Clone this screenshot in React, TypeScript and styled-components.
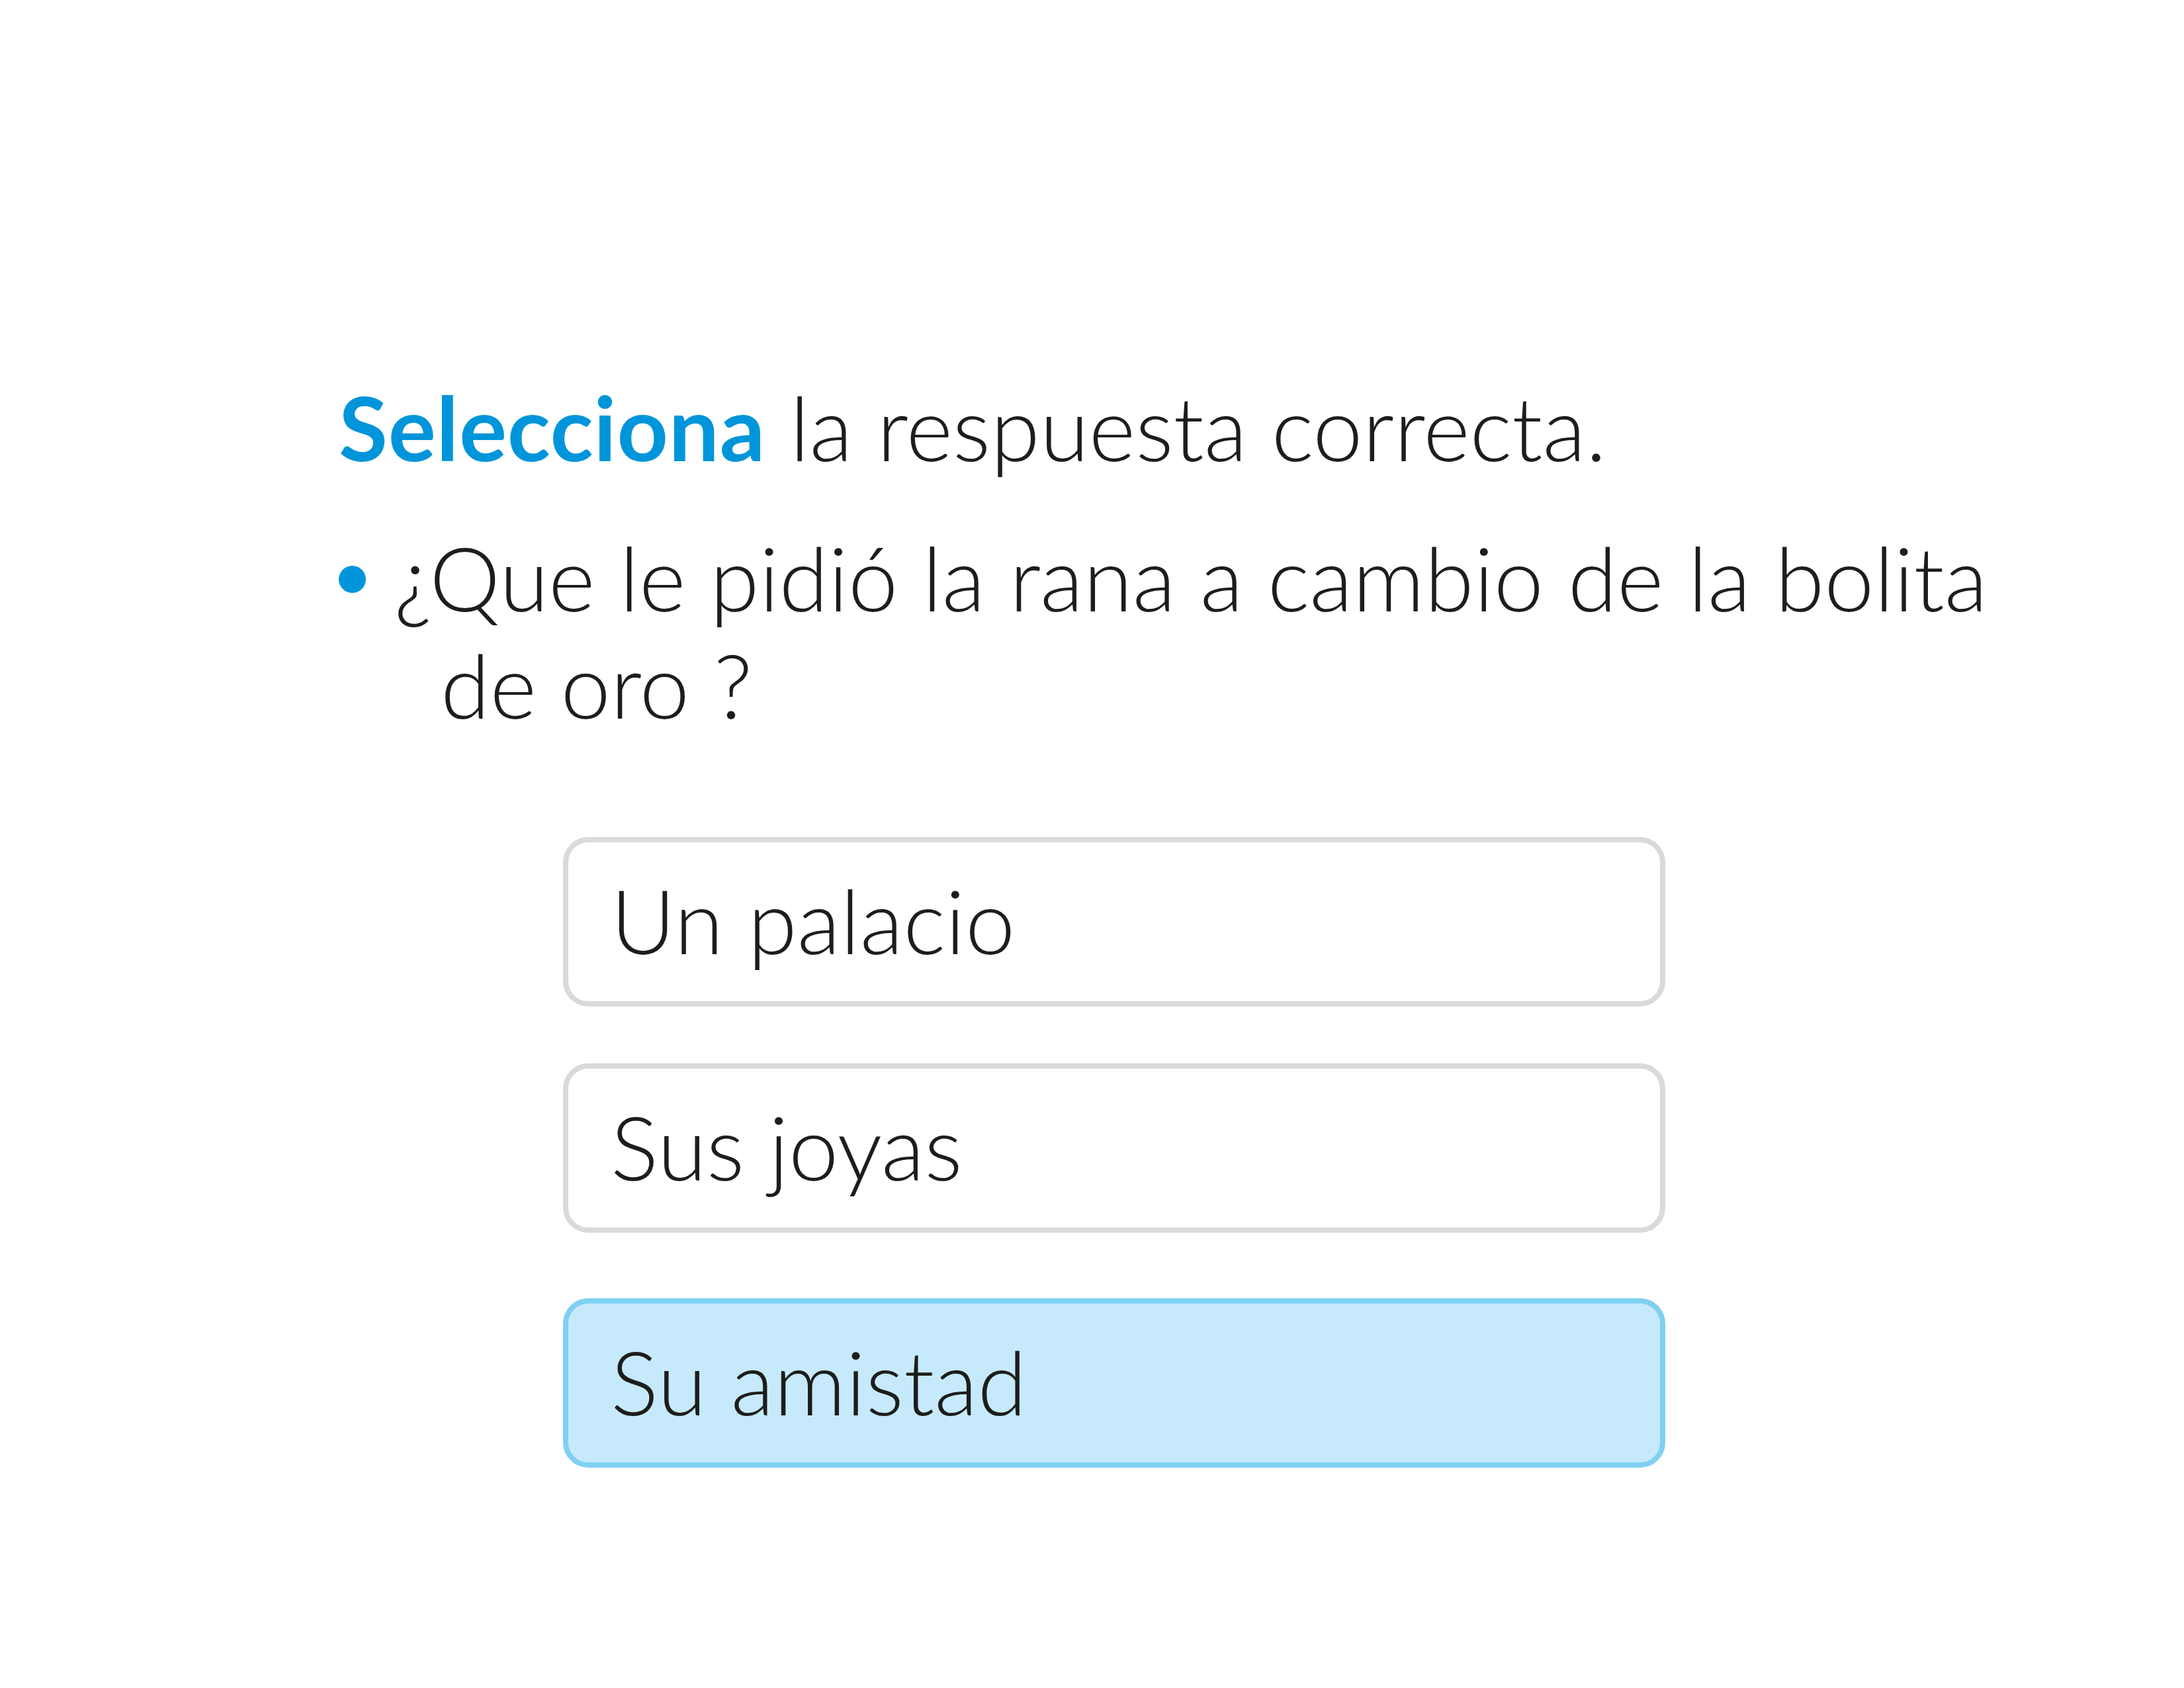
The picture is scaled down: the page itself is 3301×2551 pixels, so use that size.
import { createGlobalStyle } from "styled-components";
import styled from "styled-components";

const GlobalStyle = createGlobalStyle`
  html, body {
    margin: 0;
    padding: 0;
    background: #ffffff;
  }

  body {
    font-family: Lato, "Open Sans", sans-serif;
    color: #1d1d1b;
  }
`;

interface Option {
  label: string;
  selected?: boolean;
}

const options: Option[] = [
  { label: "Un palacio" },
  { label: "Sus joyas" },
  { label: "Su amistad", selected: true },
];

function App() {
  return (
    <>
      <GlobalStyle />
      <Page>
        <Instruction>
          <Highlight>Selecciona</Highlight> la respuesta correcta.
        </Instruction>

        <Question>
          <Bullet />
          <QuestionText>
            ¿Que le pidió la rana a cambio de la bolita
            <br />
            <Continuation>de oro ?</Continuation>
          </QuestionText>
        </Question>

        <Options>
          {options.map((option) => (
            <OptionBox key={option.label} $selected={option.selected}>
              {option.label}
            </OptionBox>
          ))}
        </Options>
      </Page>
    </>
  );
}

const Page = styled.main`
  width: 3301px;
  height: 2551px;
  box-sizing: border-box;
  padding: 564px 0 0 512px;
  display: flex;
  flex-direction: column;
`;

const Instruction = styled.h1`
  margin: 0;
  font-size: 135px;
  line-height: 162px;
  font-weight: 300;
  white-space: nowrap;
`;

const Highlight = styled.span`
  font-weight: 700;
  letter-spacing: 0.8px;
  color: #0095da;
`;

const Question = styled.div`
  display: flex;
  align-items: flex-start;
  gap: 43px;
  margin-top: 65px;
`;

const Bullet = styled.span`
  flex: none;
  width: 41px;
  height: 41px;
  margin-top: 64px;
  border-radius: 50%;
  background: #0095da;
`;

const QuestionText = styled.p`
  margin: 0;
  font-size: 135px;
  line-height: 162px;
  font-weight: 300;
  white-space: nowrap;
`;

const Continuation = styled.span`
  padding-left: 70px;
`;

const Options = styled.div`
  display: flex;
  flex-direction: column;
  gap: 86px;
  margin: 150px 0 0 339px;
  width: 1666px;
`;

const OptionBox = styled.div<{ $selected?: boolean }>`
  display: flex;
  align-items: center;
  box-sizing: border-box;
  height: 256px;
  margin-top: ${(p) => (p.$selected ? "13px" : "0")};
  padding: 0 0 6px 64px;
  border: 8px solid ${(p) => (p.$selected ? "#7fd0f3" : "#dadada")};
  border-radius: 38px;
  background: ${(p) => (p.$selected ? "#c6eafb" : "#ffffff")};
  font-size: 135px;
  font-weight: 300;
  line-height: 1;
`;

export default App;
